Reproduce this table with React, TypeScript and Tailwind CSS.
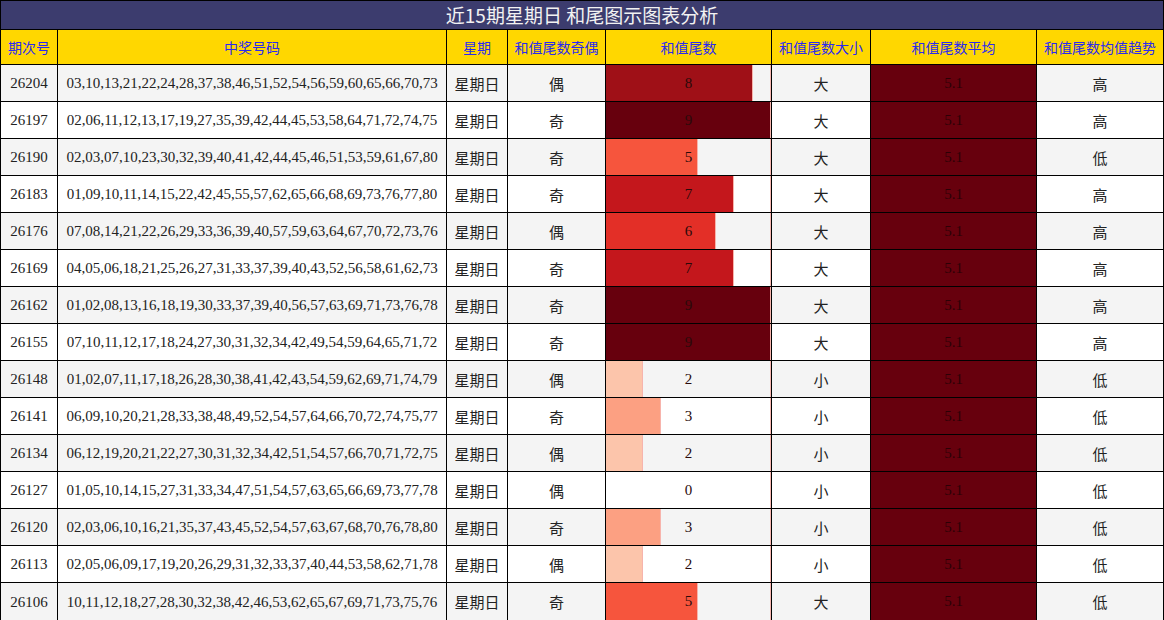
const rows = [
  { no: "26204", nums: "03,10,13,21,22,24,28,37,38,46,51,52,54,56,59,60,65,66,70,73", oe: "偶", v: 8, size: "大", trend: "高" },
  { no: "26197", nums: "02,06,11,12,13,17,19,27,35,39,42,44,45,53,58,64,71,72,74,75", oe: "奇", v: 9, size: "大", trend: "高" },
  { no: "26190", nums: "02,03,07,10,23,30,32,39,40,41,42,44,45,46,51,53,59,61,67,80", oe: "奇", v: 5, size: "大", trend: "低" },
  { no: "26183", nums: "01,09,10,11,14,15,22,42,45,55,57,62,65,66,68,69,73,76,77,80", oe: "奇", v: 7, size: "大", trend: "高" },
  { no: "26176", nums: "07,08,14,21,22,26,29,33,36,39,40,57,59,63,64,67,70,72,73,76", oe: "偶", v: 6, size: "大", trend: "高" },
  { no: "26169", nums: "04,05,06,18,21,25,26,27,31,33,37,39,40,43,52,56,58,61,62,73", oe: "奇", v: 7, size: "大", trend: "高" },
  { no: "26162", nums: "01,02,08,13,16,18,19,30,33,37,39,40,56,57,63,69,71,73,76,78", oe: "奇", v: 9, size: "大", trend: "高" },
  { no: "26155", nums: "07,10,11,12,17,18,24,27,30,31,32,34,42,49,54,59,64,65,71,72", oe: "奇", v: 9, size: "大", trend: "高" },
  { no: "26148", nums: "01,02,07,11,17,18,26,28,30,38,41,42,43,54,59,62,69,71,74,79", oe: "偶", v: 2, size: "小", trend: "低" },
  { no: "26141", nums: "06,09,10,20,21,28,33,38,48,49,52,54,57,64,66,70,72,74,75,77", oe: "奇", v: 3, size: "小", trend: "低" },
  { no: "26134", nums: "06,12,19,20,21,22,27,30,31,32,34,42,51,54,57,66,70,71,72,75", oe: "偶", v: 2, size: "小", trend: "低" },
  { no: "26127", nums: "01,05,10,14,15,27,31,33,34,47,51,54,57,63,65,66,69,73,77,78", oe: "偶", v: 0, size: "小", trend: "低" },
  { no: "26120", nums: "02,03,06,10,16,21,35,37,43,45,52,54,57,63,67,68,70,76,78,80", oe: "奇", v: 3, size: "小", trend: "低" },
  { no: "26113", nums: "02,05,06,09,17,19,20,26,29,31,32,33,37,40,44,53,58,62,71,78", oe: "偶", v: 2, size: "小", trend: "低" },
  { no: "26106", nums: "10,11,12,18,27,28,30,32,38,42,46,53,62,65,67,69,71,73,75,76", oe: "奇", v: 5, size: "大", trend: "低" },
];

const barColor: Record<number, string> = {
  0: "transparent",
  1: "#fee0d2",
  2: "#fcc5ab",
  3: "#fca082",
  4: "#fb7a5c",
  5: "#f6553d",
  6: "#e32f27",
  7: "#c4171c",
  8: "#9f1017",
  9: "#67000d",
};

const headers = ["期次号", "中奖号码", "星期", "和值尾数奇偶", "和值尾数", "和值尾数大小", "和值尾数平均", "和值尾数均值趋势"];

const grid = "grid grid-cols-[57px_389px_61px_98px_166px_99px_166px_126px]";
const serif = "font-['Liberation_Serif','Times_New_Roman',serif]";
const cjk = "font-['Noto_Sans_CJK_SC','Noto_Sans',sans-serif]";

export default function App() {
  return (
    <div className="w-[1164px] h-[620px] bg-white">
      <div className="w-[1164px] border border-black">
        <div className={`h-[29px] border-b border-black bg-[#3c3c6e] flex items-center justify-center text-[19px] text-[#f2f2f2] ${cjk}`}>
          近15期星期日 和尾图示图表分析
        </div>

        <div className={`${grid} h-[35px] border-b border-black bg-[#ffd700]`}>
          {headers.map((h, i) => (
            <div
              key={h}
              className={`flex items-center justify-center text-[14px] text-[#2a2af0] ${cjk} ${i < 7 ? "border-r border-black" : ""}`}
            >
              {h}
            </div>
          ))}
        </div>

        {rows.map((r, idx) => {
          const bg = idx % 2 === 0 ? "bg-[#f4f4f4]" : "bg-white";
          const last = idx === rows.length - 1;
          return (
            <div key={r.no} className={`${grid} h-[37px] ${last ? "" : "border-b border-black"} ${bg} text-[#222]`}>
              <div className={`flex items-center justify-center pt-px border-r border-black text-[15px] ${serif}`}>{r.no}</div>
              <div className={`flex items-center justify-center pt-px border-r border-black text-[15px] ${serif}`}>{r.nums}</div>
              <div className={`flex items-center justify-center pt-[2px] border-r border-black text-[15px] ${cjk}`}>星期日</div>
              <div className={`flex items-center justify-center pt-[2px] border-r border-black text-[15px] ${cjk}`}>{r.oe}</div>
              <div className="relative border-r border-black">
                <div className="absolute right-0 top-0 bottom-0 w-px bg-[#f6b6b0]" />
                {r.v > 0 && (
                  <div
                    className="absolute left-0 top-0 bottom-0 border-r border-[#f7b4ac]"
                    style={{ width: `${(r.v / 9) * 165}px`, background: barColor[r.v] }}
                  />
                )}
                <div className={`relative h-full flex items-center justify-center text-[15px] text-[#2a0a0a] ${serif}`}>
                  {r.v}
                </div>
              </div>
              <div className={`flex items-center justify-center pt-[2px] border-r border-black text-[15px] ${cjk}`}>{r.size}</div>
              <div className={`flex items-center justify-center border-r border-black bg-[#67000d] text-[15px] text-[#2c0006] ${serif}`}>
                5.1
              </div>
              <div className={`flex items-center justify-center pt-[2px] text-[15px] ${cjk}`}>{r.trend}</div>
            </div>
          );
        })}
      </div>
    </div>
  );
}
